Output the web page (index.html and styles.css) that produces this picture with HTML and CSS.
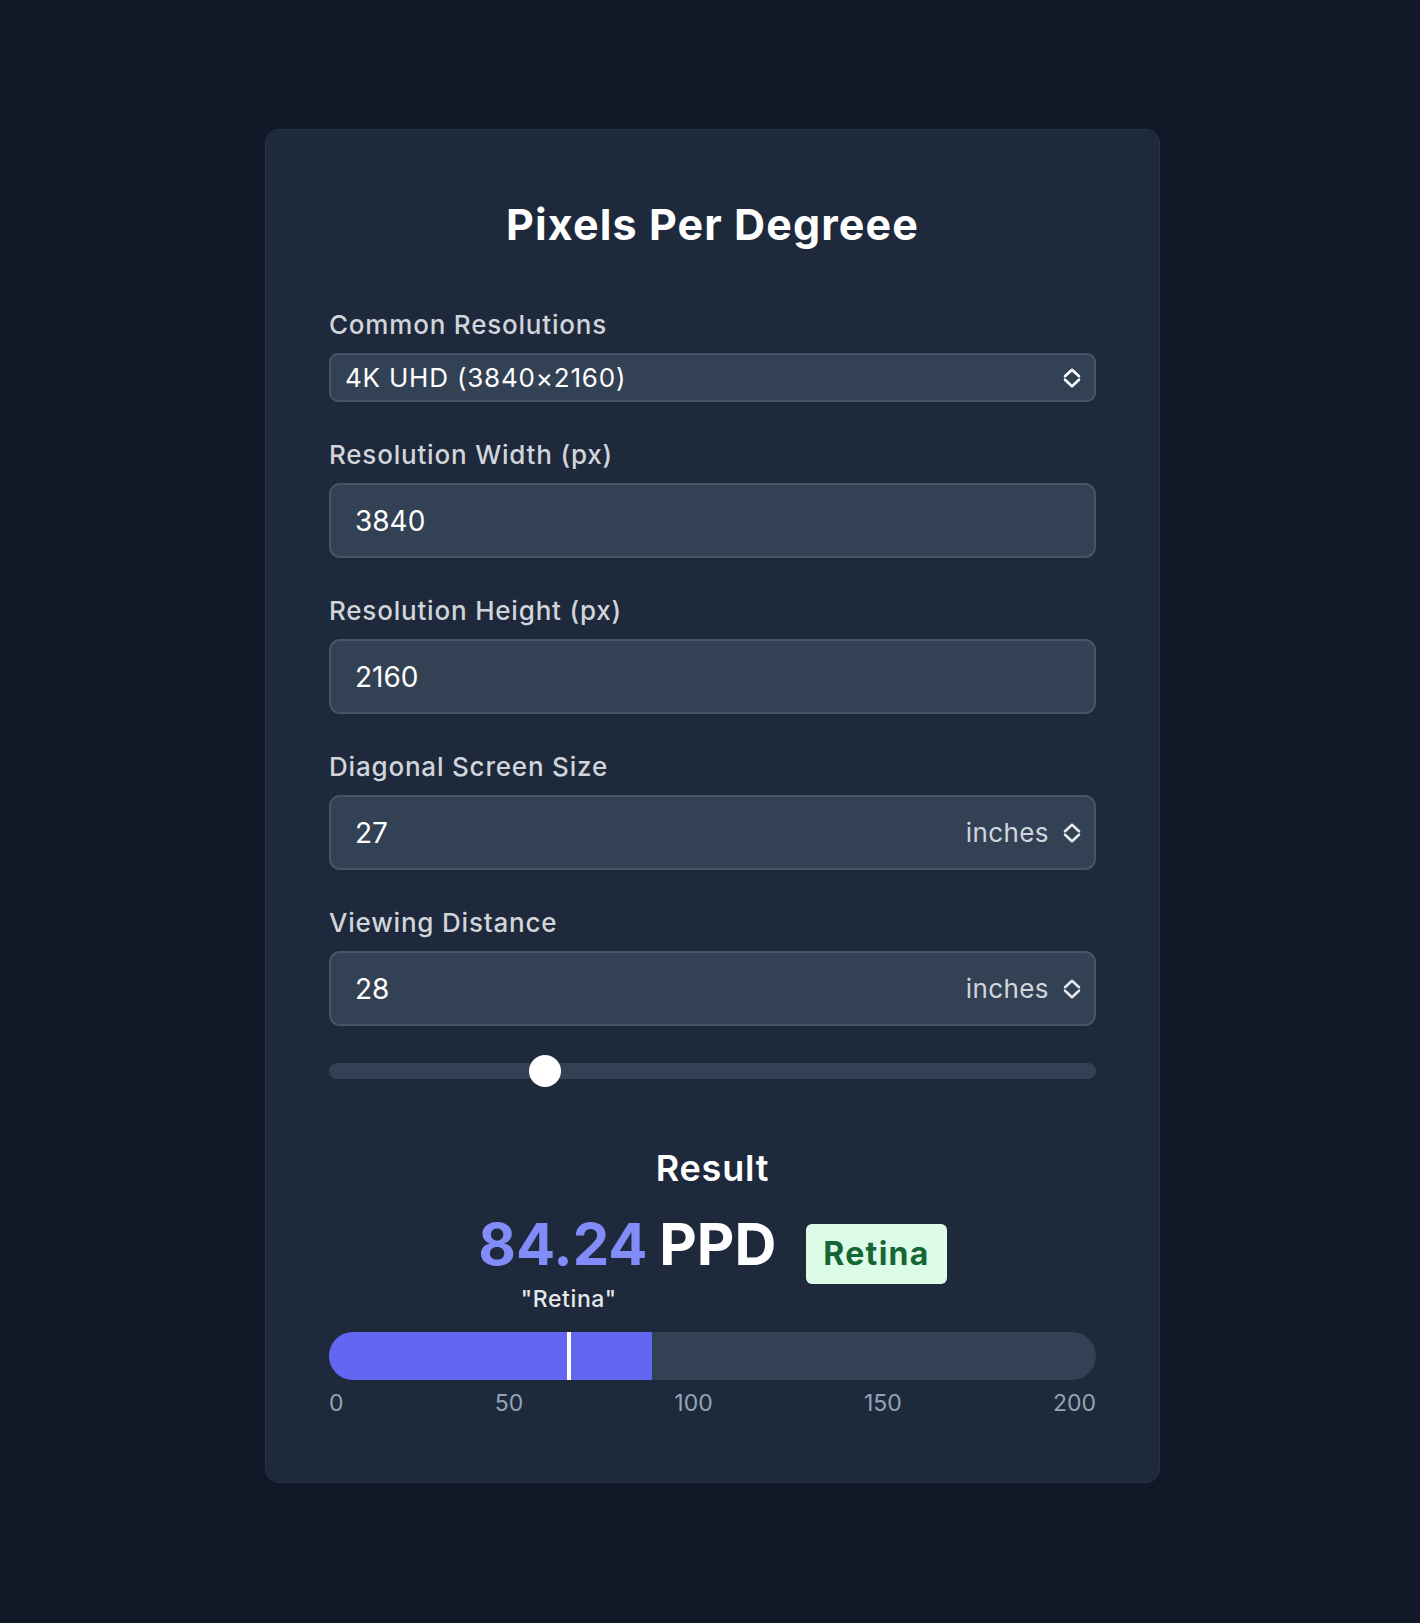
FILE: index.html
```html
<!DOCTYPE html>
<html lang="en">
<head>
<meta charset="utf-8">
<title>Pixels Per Degreee</title>
<link rel="stylesheet" href="styles.css">
</head>
<body>
<main class="card">
  <h1 class="title">Pixels Per Degreee</h1>

  <div class="field">
    <div class="label">Common Resolutions</div>
    <div class="select">
      <span class="select-text">4K UHD (3840×2160)</span>
      <svg class="chev" viewBox="0 0 20 22" width="20" height="22"><path d="M3 9.3 L10 2.8 L17 9.3 M3 12.7 L10 19.2 L17 12.7" fill="none" stroke="#ffffff" stroke-width="2.6" stroke-linecap="round" stroke-linejoin="round"/></svg>
    </div>
  </div>

  <div class="field">
    <div class="label">Resolution Width (px)</div>
    <div class="input"><span class="value">3840</span></div>
  </div>

  <div class="field">
    <div class="label">Resolution Height (px)</div>
    <div class="input"><span class="value">2160</span></div>
  </div>

  <div class="field">
    <div class="label">Diagonal Screen Size</div>
    <div class="input">
      <span class="value">27</span>
      <span class="unit">inches
        <svg class="chev" viewBox="0 0 20 22" width="20" height="22"><path d="M3 9.3 L10 2.8 L17 9.3 M3 12.7 L10 19.2 L17 12.7" fill="none" stroke="#e5e7eb" stroke-width="2.6" stroke-linecap="round" stroke-linejoin="round"/></svg>
      </span>
    </div>
  </div>

  <div class="field">
    <div class="label">Viewing Distance</div>
    <div class="input">
      <span class="value">28</span>
      <span class="unit">inches
        <svg class="chev" viewBox="0 0 20 22" width="20" height="22"><path d="M3 9.3 L10 2.8 L17 9.3 M3 12.7 L10 19.2 L17 12.7" fill="none" stroke="#e5e7eb" stroke-width="2.6" stroke-linecap="round" stroke-linejoin="round"/></svg>
      </span>
    </div>
  </div>

  <div class="slider">
    <div class="thumb" style="left: 28.2%"></div>
  </div>

  <h2 class="result-title">Result</h2>
  <div class="result-row">
    <span class="number"><span class="num">84.24</span> PPD</span>
    <span class="badge">Retina</span>
  </div>

  <div class="bar-wrap">
    <div class="marker-label" style="left: 31.27%">"Retina"</div>
    <div class="bar">
      <div class="fill" style="width: 42.12%"></div>
      <div class="marker" style="left: 31.27%"></div>
    </div>
  </div>
  <div class="ticks">
    <span>0</span><span>50</span><span>100</span><span>150</span><span>200</span>
  </div>
</main>
</body>
</html>
```

FILE: styles.css
```css
* { box-sizing: border-box; }

html, body {
  margin: 0;
  background: #111827;
}

body {
  font-family: Inter, "Noto Sans", "Liberation Sans", sans-serif;
  color: #ffffff;
  padding: 129px 0 141px 5px;
}

.card {
  width: 895px;
  margin: 0 auto;
  background: #1e293b;
  border: 1px solid #263246;
  border-radius: 14px;
  padding: 70px 63px 65px;
}

.title {
  margin: 0;
  text-align: center;
  font-size: 43px;
  line-height: 48px;
  font-weight: 700;
  letter-spacing: 1.1px;
}

.field {
  margin-top: 37px;
}

.field:first-of-type {
  margin-top: 61px;
}

.label {
  font-size: 26px;
  line-height: 32px;
  font-weight: 500;
  letter-spacing: 0.8px;
  color: #d1d5db;
  margin-bottom: 12px;
}

.select {
  display: flex;
  align-items: center;
  justify-content: space-between;
  height: 49px;
  background: #334155;
  border: 2px solid #475569;
  border-radius: 9px;
  padding: 0 12px 0 14px;
  font-size: 26px;
  letter-spacing: 0.8px;
  color: #ffffff;
}

.input {
  display: flex;
  align-items: center;
  justify-content: space-between;
  height: 75px;
  background: #334155;
  border: 2px solid #475569;
  border-radius: 11px;
  padding: 0 12px 0 24px;
  font-size: 28px;
  color: #ffffff;
}

.unit {
  display: flex;
  align-items: center;
  gap: 13px;
  color: #d1d5db;
  font-size: 26px;
  letter-spacing: 0.4px;
}

.chev { display: block; flex: none; }

.slider {
  position: relative;
  height: 16px;
  margin-top: 37px;
  background: #334155;
  border-radius: 8px;
}

.thumb {
  position: absolute;
  top: 50%;
  width: 32px;
  height: 32px;
  border-radius: 50%;
  background: #ffffff;
  transform: translate(-50%, -50%);
}

.result-title {
  margin: 67px 0 0;
  text-align: center;
  font-size: 36px;
  line-height: 44px;
  font-weight: 600;
  letter-spacing: 0.8px;
}

.result-row {
  display: flex;
  align-items: baseline;
  justify-content: center;
  gap: 30px;
  margin-top: 22px;
}

.number {
  font-size: 58px;
  line-height: 64px;
  font-weight: 700;
  color: #ffffff;
}

.num { color: #818cf8; margin-right: -2px; }

.badge {
  background: #dcfce7;
  color: #166534;
  font-size: 32px;
  line-height: 36px;
  font-weight: 700;
  letter-spacing: 1.3px;
  padding: 12px 17px;
  border-radius: 6px;
}

.bar-wrap {
  position: relative;
  margin-top: 48px;
}

.marker-label {
  position: absolute;
  bottom: calc(100% + 19px);
  transform: translateX(-50%);
  font-size: 23px;
  line-height: 28px;
  font-weight: 500;
  letter-spacing: 0.6px;
  color: #e5e7eb;
  white-space: nowrap;
}

.bar {
  position: relative;
  height: 48px;
  background: #334155;
  border-radius: 24px;
  overflow: hidden;
}

.fill {
  height: 100%;
  background: #6366f1;
}

.marker {
  position: absolute;
  top: 0;
  bottom: 0;
  width: 4px;
  margin-left: -2px;
  background: #ffffff;
}

.ticks {
  display: flex;
  justify-content: space-between;
  margin-top: 9px;
  font-size: 23px;
  line-height: 28px;
  color: #94a3b8;
}
```
